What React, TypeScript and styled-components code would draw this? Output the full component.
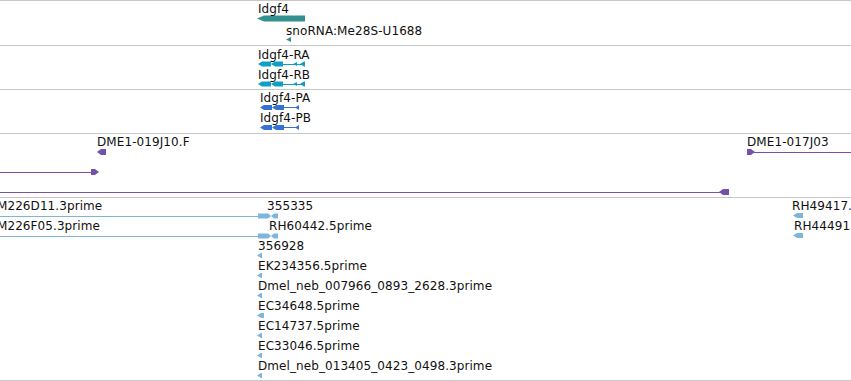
import { createGlobalStyle, styled } from "styled-components";

const GlobalStyle = createGlobalStyle`
  html, body {
    margin: 0;
    padding: 0;
    background: #fff;
  }
  body {
    overflow: hidden;
  }
`;

const Browser = styled.div`
  width: 851px;
  height: 381px;
  display: flex;
  flex-direction: column;
  overflow: hidden;
  background: #fff;
  font-family: "DejaVu Sans", "Liberation Sans", sans-serif;
`;

const StyledTrack = styled.div<{ $height: number; $last?: boolean }>`
  position: relative;
  flex: 0 0 ${(p) => p.$height}px;
  box-sizing: border-box;
  border-top: 1px solid #c6c6c6;
  border-bottom: ${(p) => (p.$last ? "1px solid #c6c6c6" : "none")};
  overflow: hidden;
`;

const Canvas = styled.svg`
  position: absolute;
  left: 0;
  top: 0;
  width: 100%;
  height: 100%;
  overflow: visible;
`;

const Label = styled.span`
  position: absolute;
  font-size: 12px;
  line-height: 14px;
  letter-spacing: 0.08px;
  color: #111;
  white-space: nowrap;
`;

type Shape =
  | { kind: "line"; x1: number; x2: number; y: number }
  | {
      kind: "arrow";
      x1: number;
      x2: number;
      y: number;
      h: number;
      dir: "left" | "right";
      tip?: number;
    };

type TrackData = {
  top: number;
  height: number;
  color: string;
  labels: { text: string; x: number; y: number }[];
  shapes: Shape[];
};

function arrowPoints(s: Extract<Shape, { kind: "arrow" }>) {
  const tip = s.tip ?? 4;
  const t = s.y - s.h / 2;
  const b = s.y + s.h / 2;
  if (s.dir === "left") {
    return `${s.x1},${s.y} ${s.x1 + tip},${t} ${s.x2},${t} ${s.x2},${b} ${s.x1 + tip},${b}`;
  }
  return `${s.x2},${s.y} ${s.x2 - tip},${t} ${s.x1},${t} ${s.x1},${b} ${s.x2 - tip},${b}`;
}

// transcript: two exons, an intron with a small chevron, and a last exon
const transcript = (y: number): Shape[] => [
  { kind: "line", x1: 283, x2: 304, y },
  { kind: "arrow", x1: 258, x2: 271, y, h: 5, dir: "left" },
  { kind: "arrow", x1: 271, x2: 283, y, h: 5, dir: "left" },
  { kind: "arrow", x1: 293, x2: 297, y, h: 4, dir: "left" },
  { kind: "arrow", x1: 300, x2: 305, y, h: 5, dir: "left" },
];

const protein = (y: number): Shape[] => [
  { kind: "line", x1: 284, x2: 299, y },
  { kind: "arrow", x1: 260, x2: 272, y, h: 5, dir: "left" },
  { kind: "arrow", x1: 272, x2: 284, y, h: 5, dir: "left" },
  { kind: "arrow", x1: 295, x2: 299, y, h: 5, dir: "left" },
];

const cloneEnd = (y: number): Shape[] => [
  { kind: "line", x1: 0, x2: 258, y },
  { kind: "arrow", x1: 258, x2: 271, y, h: 5, dir: "right", tip: 3 },
  { kind: "arrow", x1: 271, x2: 278, y, h: 5, dir: "left", tip: 3 },
];

const estRows = [
  "356928",
  "EK234356.5prime",
  "Dmel_neb_007966_0893_2628.3prime",
  "EC34648.5prime",
  "EC14737.5prime",
  "EC33046.5prime",
  "Dmel_neb_013405_0423_0498.3prime",
];

const tracks: TrackData[] = [
  {
    top: 0,
    height: 45,
    color: "#33908e",
    labels: [
      { text: "Idgf4", x: 258, y: 2 },
      { text: "snoRNA:Me28S-U1688", x: 286, y: 24 },
    ],
    shapes: [
      { kind: "arrow", x1: 257, x2: 305, y: 18.5, h: 6, dir: "left", tip: 7 },
      { kind: "arrow", x1: 286, x2: 291, y: 39.5, h: 5, dir: "left", tip: 5 },
    ],
  },
  {
    top: 45,
    height: 44,
    color: "#0e9ec6",
    labels: [
      { text: "Idgf4-RA", x: 258, y: 48 },
      { text: "Idgf4-RB", x: 258, y: 68 },
    ],
    shapes: [...transcript(64), ...transcript(84)],
  },
  {
    top: 89,
    height: 44,
    color: "#3672d4",
    labels: [
      { text: "Idgf4-PA", x: 260, y: 91 },
      { text: "Idgf4-PB", x: 260, y: 111 },
    ],
    shapes: [...protein(107.5), ...protein(127.5)],
  },
  {
    top: 133,
    height: 64,
    color: "#7552a9",
    labels: [
      { text: "DME1-019J10.F", x: 97, y: 135 },
      { text: "DME1-017J03", x: 747, y: 135 },
    ],
    shapes: [
      { kind: "arrow", x1: 97, x2: 106, y: 152, h: 6, dir: "left" },
      { kind: "line", x1: 0, x2: 92, y: 172 },
      { kind: "arrow", x1: 91, x2: 99, y: 172, h: 6, dir: "right" },
      { kind: "line", x1: 0, x2: 720, y: 192 },
      { kind: "arrow", x1: 719, x2: 729, y: 192, h: 6, dir: "left" },
      { kind: "line", x1: 754, x2: 851, y: 152 },
      { kind: "arrow", x1: 747, x2: 755, y: 152, h: 6, dir: "right" },
    ],
  },
  {
    top: 197,
    height: 184,
    color: "#7db5df",
    labels: [
      { text: "M226D11.3prime", x: -3, y: 199 },
      { text: "355335", x: 267, y: 199 },
      { text: "M226F05.3prime", x: -3, y: 219 },
      { text: "RH60442.5prime", x: 269, y: 219 },
      { text: "RH49417.5prime", x: 792, y: 199 },
      { text: "RH44491.5prime", x: 794, y: 219 },
      ...estRows.map((text, i) => ({ text, x: 258, y: 239 + i * 20 })),
    ],
    shapes: [
      ...cloneEnd(216),
      ...cloneEnd(236),
      { kind: "arrow", x1: 793, x2: 803, y: 215.5, h: 5, dir: "left" },
      { kind: "arrow", x1: 793, x2: 803, y: 235.5, h: 5, dir: "left" },
      ...estRows.map(
        (_, i): Shape => ({
          kind: "arrow",
          x1: 257,
          x2: i === 3 ? 264 : 262,
          y: 255.5 + i * 20,
          h: 5,
          dir: "left",
          tip: 4,
        })
      ),
    ],
  },
];

function Track({ data, last }: { data: TrackData; last?: boolean }) {
  const origin = data.top + 1;
  return (
    <StyledTrack $height={data.height} $last={last}>
      <Canvas>
        <g transform={`translate(0, ${-origin})`} fill={data.color} stroke={data.color}>
          {data.shapes.map((s, i) =>
            s.kind === "line" ? (
              <line
                key={i}
                x1={s.x1}
                x2={s.x2}
                y1={Math.floor(s.y) + 0.5}
                y2={Math.floor(s.y) + 0.5}
                strokeWidth={1}
                shapeRendering="crispEdges"
              />
            ) : (
              <polygon key={i} points={arrowPoints(s)} stroke="none" />
            )
          )}
        </g>
      </Canvas>
      {data.labels.map((l) => (
        <Label key={l.text} style={{ left: l.x, top: l.y - origin }}>
          {l.text}
        </Label>
      ))}
    </StyledTrack>
  );
}

export default function App() {
  return (
    <>
      <GlobalStyle />
      <Browser>
        {tracks.map((t, i) => (
          <Track key={t.top} data={t} last={i === tracks.length - 1} />
        ))}
      </Browser>
    </>
  );
}
